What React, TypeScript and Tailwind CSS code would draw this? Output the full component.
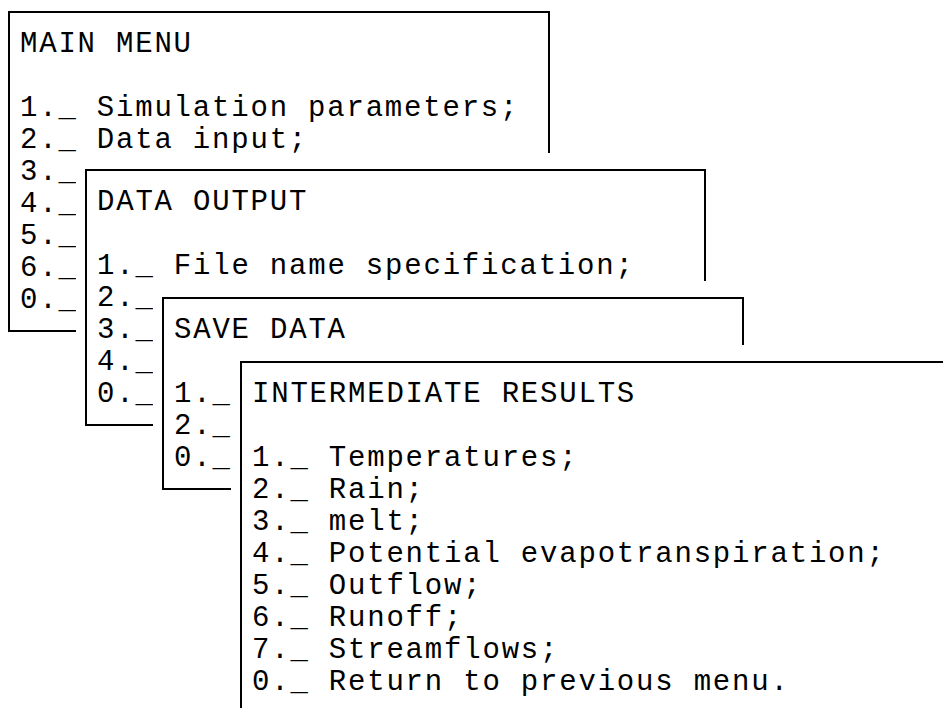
import React from 'react';

type MenuBoxProps = {
  title: string;
  rows: string[];
  className: string;
};

function MenuBox({ title, rows, className }: MenuBoxProps) {
  return (
    <div
      className={`absolute bg-white border-2 border-black pl-[10px] pt-[16px] pb-[13px] ${className}`}
    >
      <p className="whitespace-pre">{title}</p>
      <div className="h-[32px]" />
      {rows.map((row) => (
        <p key={`row-${title}-${row}`} className="whitespace-pre">
          {row}
        </p>
      ))}
    </div>
  );
}

export default function App() {
  return (
    <div className="relative w-[943px] h-[708px] overflow-hidden bg-white text-black text-[29px] leading-[32px] tracking-[1.8px] font-['Courier_New','Nimbus_Mono_PS','FreeMono','Liberation_Mono',monospace]">
      <MenuBox
        title="MAIN MENU"
        className="left-[8px] top-[11px] w-[542px]"
        rows={['1._ Simulation parameters;', '2._ Data input;', '3._', '4._', '5._', '6._', '0._']}
      />
      <MenuBox
        title="DATA OUTPUT"
        className="left-[85px] top-[169px] w-[621px] shadow-[-9px_-16px_0_white]"
        rows={['1._ File name specification;', '2._', '3._', '4._', '0._']}
      />
      <MenuBox
        title="SAVE DATA"
        className="left-[162px] top-[297px] w-[582px] shadow-[-9px_-16px_0_white]"
        rows={['1._', '2._', '0._']}
      />
      <MenuBox
        title="INTERMEDIATE RESULTS"
        className="left-[240px] top-[361px] w-[720px] shadow-[-9px_-16px_0_white]"
        rows={[
          '1._ Temperatures;',
          '2._ Rain;',
          '3._ melt;',
          '4._ Potential evapotranspiration;',
          '5._ Outflow;',
          '6._ Runoff;',
          '7._ Streamflows;',
          '0._ Return to previous menu.',
        ]}
      />
    </div>
  );
}
